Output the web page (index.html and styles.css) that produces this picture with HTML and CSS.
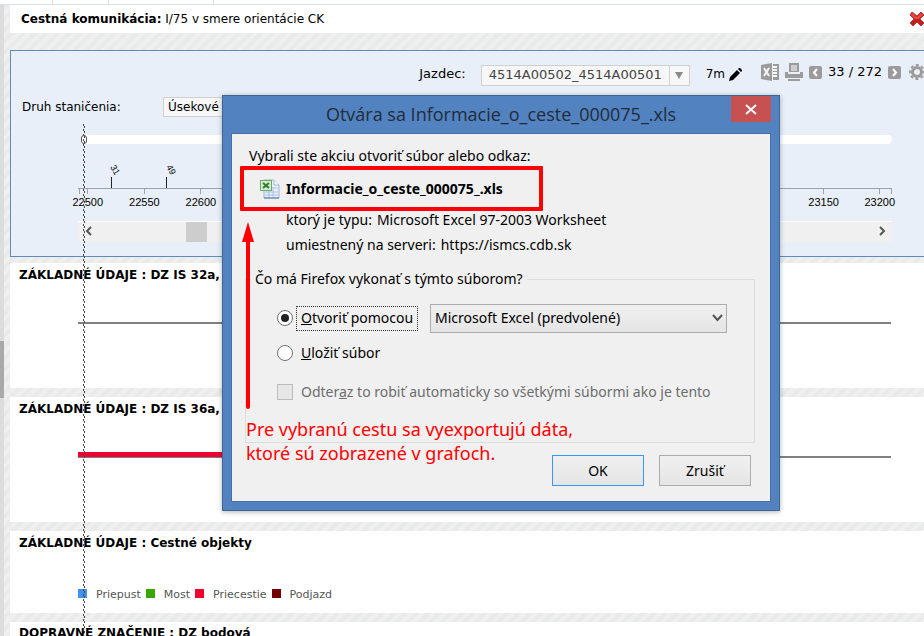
FILE: index.html
```html
<!DOCTYPE html>
<html lang="sk">

<head>
  <meta charset="utf-8" />
  <title>Cestná komunikácia I/75</title>
  <meta name="viewport" content="width=device-width, initial-scale=1" />
  <link rel="stylesheet" href="styles.css">
</head>

<body>
  <div class="tabs">
    <span class="tab tab-first"></span>
    <span class="tab tab-second"></span>
    <span class="tab tab-third"></span>
  </div>

  <div class="layout">
    <div class="splitter"><div class="splitter-handle"></div></div>

    <main class="content">
      <header class="road">
        <h1 class="road-name"><b>Cestná komunikácia:</b> I/75 v smere orientácie CK</h1>
        <button class="icon-button" aria-label="Zavrieť">
          <svg width="16" height="16" viewBox="0 0 16 16">
            <path d="M3 1 L8 5 L12 1 L15 4 L11 8 L15 12 L12 15 L8 11 L4 15 L1 12 L5 8 L1 4 Z" fill="#c51d1d" stroke="#b43c3c" />
            <path d="M3 2 L8 6 L12 2 L14 4 L10 8 H6 L2 4 Z" fill="#e04a45" />
          </svg>
        </button>
      </header>

      <section class="toolbox">
        <div class="toolbar">
          <label class="rider-label" for="rider">Jazdec:</label>
          <div class="combo">
            <select id="rider" class="combo-select">
              <option>4514A00502_4514A00501</option>
            </select>
            <span class="combo-arrow"><svg width="8" height="7"><path d="M0 0 H8 L4 7 Z" fill="#8a8a8a" /></svg></span>
          </div>
          <span class="offset">7m</span>
          <button class="icon-button" aria-label="Upraviť">
            <svg width="13" height="13" viewBox="0 0 13 13"><path d="M0 13 L1 9 L8 2 L11 5 L4 12 Z M9 1 L10 0 H11 L13 2 V3 L12 4 Z" fill="#000" /></svg>
          </button>
          <div class="tools">
            <button class="icon-button" aria-label="Export do Excelu">
              <svg width="18" height="18" viewBox="0 0 18 18">
                <path d="M0 2 L11 0 V18 L0 16 Z M12 1 H18 V17 H12 Z" fill="#9b9b9b" />
                <path d="M3 5 L8 13 M8 5 L3 13" stroke="#f4f6f8" stroke-width="2" />
                <path d="M12 4 H16 M12 7 H16 M12 10 H16 M12 13 H16" stroke="#f4f6f8" stroke-width="2" stroke-dasharray="4 1" />
              </svg>
            </button>
            <button class="icon-button" aria-label="Tlačiť">
              <svg width="18" height="18" viewBox="0 0 18 18">
                <path d="M4 0 H14 V9 H4 Z M0 9 H3 V11 H15 V9 H18 V15 H0 Z M3 16 H15 V18 H3 Z" fill="#9b9b9b" />
                <path d="M6 3 H12 M6 5 H12 M6 7 H12" stroke="#fff" />
              </svg>
            </button>
            <button class="icon-button" aria-label="Predchádzajúci">
              <svg width="13" height="13" viewBox="0 0 13 13"><rect width="13" height="13" rx="2" fill="#9b9b9b" /><path d="M8 3 L5 6.500 L8 10" fill="none" stroke="#fff" stroke-width="2" /></svg>
            </button>
            <span class="pager">33 / 272</span>
            <button class="icon-button" aria-label="Nasledujúci">
              <svg width="13" height="13" viewBox="0 0 13 13"><rect width="13" height="13" rx="2" fill="#9b9b9b" /><path d="M5 3 L8 6.500 L5 10" fill="none" stroke="#fff" stroke-width="2" /></svg>
            </button>
            <button class="icon-button gear" aria-label="Nastavenia">
              <svg width="16" height="16" viewBox="0 0 16 16">
                <circle cx="8" cy="8" r="4.500" fill="none" stroke="#9b9b9b" stroke-width="3" />
                <circle cx="8" cy="8" r="7" fill="none" stroke="#9b9b9b" stroke-width="2" stroke-dasharray="3 2.500" stroke-dashoffset="1.500" />
              </svg>
            </button>
          </div>
        </div>

        <div class="chainage">
          <label class="chainage-label" for="chainage">Druh staničenia:</label>
          <select id="chainage" class="chainage-select">
            <option>Úsekové</option>
          </select>
        </div>

        <div class="plot">
          <input class="slider" type="range" min="0" max="100" value="0" aria-label="Poloha jazdca">
          <svg class="axis" width="100%" height="48">
            <g stroke="#a0a0a8" shape-rendering="crispEdges">
              <line x1="0" y1="26" x2="100%" y2="26" />
              <line x1="1" y1="26" x2="1" y2="32" />
              <line x1="99.900%" y1="26" x2="99.900%" y2="32" />
              <line x1="1.200%" y1="26" x2="1.200%" y2="32" />
              <line x1="8.150%" y1="26" x2="8.150%" y2="32" />
              <line x1="15.100%" y1="26" x2="15.100%" y2="32" />
              <line x1="91.600%" y1="26" x2="91.600%" y2="32" />
              <line x1="98.500%" y1="26" x2="98.500%" y2="32" />
            </g>
            <g stroke="#222" shape-rendering="crispEdges">
              <line x1="4.100%" y1="15" x2="4.100%" y2="26" />
              <line x1="10.900%" y1="15" x2="10.900%" y2="26" />
            </g>
            <g class="axis-text">
              <text x="1.200%" y="44">22500</text>
              <text x="8.150%" y="44">22550</text>
              <text x="15.100%" y="44">22600</text>
              <text x="91.600%" y="44">23150</text>
              <text x="98.500%" y="44">23200</text>
            </g>
            <g class="marker-text">
              <text transform="translate(32 5) rotate(60)">31</text>
              <text transform="translate(88 5) rotate(60)">49</text>
            </g>
          </svg>
          <div class="scroller">
            <button class="scroller-button" aria-label="Doľava"><svg width="7" height="10"><path d="M6 1 L2 5 L6 9" fill="none" stroke="#555" stroke-width="2" /></svg></button>
            <div class="scroller-track"><div class="scroller-thumb"></div></div>
            <button class="scroller-button" aria-label="Doprava"><svg width="7" height="10"><path d="M1 1 L5 5 L1 9" fill="none" stroke="#555" stroke-width="2" /></svg></button>
          </div>
        </div>
      </section>

      <section class="chart">
        <h2 class="chart-title">ZÁKLADNÉ ÚDAJE : DZ IS 32a,</h2>
        <div class="baseline"></div>
      </section>

      <section class="chart">
        <h2 class="chart-title">ZÁKLADNÉ ÚDAJE : DZ IS 36a,</h2>
        <div class="baseline baseline-band"><div class="band"></div></div>
      </section>

      <section class="chart chart-objects">
        <h2 class="chart-title">ZÁKLADNÉ ÚDAJE : Cestné objekty</h2>
        <ul class="legend">
          <li class="legend-item culvert">Priepust</li>
          <li class="legend-item bridge">Most</li>
          <li class="legend-item crossing">Priecestie</li>
          <li class="legend-item underpass">Podjazd</li>
        </ul>
      </section>

      <section class="chart chart-signs">
        <h2 class="chart-title">DOPRAVNÉ ZNAČENIE : DZ bodová</h2>
      </section>
    </main>
  </div>

  <svg class="cursor-line" width="2" shape-rendering="crispEdges">
    <line x1="0.500" y1="0" x2="0.500" y2="100%" stroke="#444" stroke-dasharray="2 3" />
    <line x1="1.500" y1="2" x2="1.500" y2="100%" stroke="#444" stroke-dasharray="2 3" />
  </svg>

  <div class="dialog" role="dialog" aria-labelledby="dialog-title">
    <div class="dialog-bar">
      <h2 id="dialog-title" class="dialog-title">Otvára sa Informacie_o_ceste_000075_.xls</h2>
      <button class="dialog-close" aria-label="Zavrieť"><svg width="12" height="11"><path d="M1 1 L11 10 M11 1 L1 10" stroke="#fff" stroke-width="2" /></svg></button>
    </div>
    <form class="dialog-body">
      <p class="intro">Vybrali ste akciu otvoriť súbor alebo odkaz:</p>
      <div class="file">
        <svg width="20" height="20" viewBox="0 0 20 20">
          <path d="M7 1 H14 L19 6 V19 H4 V1 Z" fill="#e9f0f9" stroke="#9db4d3" />
          <path d="M14 1 V6 H19" fill="#fff" stroke="#9db4d3" />
          <path d="M5 13 H18 M5 16 H18 M9 12 V18 M13 8 V18 M13 9 H18" stroke="#a9c0df" />
          <path d="M4 19 H19" stroke="#4f79b5" />
          <rect x="0" y="1" width="12" height="11" fill="#6fa86c" />
          <rect x="1" y="2" width="10" height="9" fill="#d6ebd0" />
          <path d="M3 4 L9 9 M9 4 L3 9" stroke="#2f7d32" stroke-width="2" />
        </svg>
        <strong>Informacie_o_ceste_000075_.xls</strong>
      </div>
      <dl class="details">
        <dt>ktorý je typu:</dt>
        <dd>Microsoft Excel 97-2003 Worksheet</dd>
      </dl>
      <dl class="details">
        <dt>umiestnený na serveri:</dt>
        <dd>https://ismcs.cdb.sk</dd>
      </dl>

      <fieldset class="choice">
        <legend class="choice-title">Čo má Firefox vykonať s týmto súborom?</legend>
        <div class="option option-open">
          <input class="radio" type="radio" name="action" id="open" checked>
          <label class="focused" for="open"><u>O</u>tvoriť pomocou</label>
          <div class="app">
            <select class="app-select" aria-label="Aplikácia">
              <option>Microsoft Excel (predvolené)</option>
            </select>
            <svg class="app-arrow" width="11" height="8"><path d="M1 1 L5.500 6 L10 1" fill="none" stroke="#555" stroke-width="2" /></svg>
          </div>
        </div>
        <div class="option">
          <input class="radio" type="radio" name="action" id="save">
          <label for="save"><u>U</u>ložiť súbor</label>
        </div>
        <div class="option option-auto">
          <input class="check" type="checkbox" id="auto" disabled>
          <label for="auto">Odter<u>a</u>z to robiť automaticky so všetkými súbormi ako je tento</label>
        </div>
      </fieldset>

      <div class="actions">
        <button type="button" class="action action-default">OK</button>
        <button type="button" class="action">Zrušiť</button>
      </div>
    </form>

    <div class="mark-box"></div>
    <svg class="mark-arrow" width="12" height="187" viewBox="0 0 12 187">
      <path d="M6 0 L12 20 H0 Z" fill="#f00" />
      <path d="M6 18 V185" stroke="#f00" stroke-width="4" stroke-linecap="round" />
    </svg>
    <p class="mark-note">Pre vybranú cestu sa vyexportujú dáta,<br>ktoré sú zobrazené v grafoch.</p>
  </div>
</body>

</html>
```
FILE: styles.css
```css
* {
  box-sizing: border-box;
}

body {
  display: flex;
  flex-direction: column;
  height: 100vh;
  margin: 0;
  overflow: hidden;
  position: relative;
  font-family: Verdana, 'DejaVu Sans', sans-serif;
  font-size: 12px;
  line-height: 16px;
  color: #000;
}

h1,
h2,
p,
dl,
dd,
ul {
  margin: 0;
  padding: 0;
}

button,
select,
input {
  font: inherit;
  color: inherit;
  margin: 0;
}

.tabs {
  display: flex;
  flex: none;
  height: 5px;
  background: #fff;
  border-bottom: 1px solid #dbe1e5;
}

.tab {
  border-right: 1px solid #dbe1e5;
}

.tab-first {
  width: 53px;
}

.tab-second {
  width: 56px;
}

.tab-third {
  width: 105px;
}

.layout {
  display: flex;
  flex: 1;
  min-height: 0;
}

.splitter {
  display: flex;
  align-items: center;
  flex: none;
  width: 4px;
  padding-top: 97px;
  background: #dcdcdc;
}

.splitter-handle {
  width: 4px;
  height: 57px;
  background: #a9a9a9;
}

.content {
  flex: 1;
  min-width: 0;
  padding-left: 6px;
  overflow: hidden;
  background: repeating-linear-gradient(135deg, #e9ebea 0, #e9ebea 4px, #eeefee 4px, #eeefee 8px);
}

/* road header */

.road {
  display: flex;
  align-items: center;
  justify-content: space-between;
  height: 28px;
  padding-left: 11px;
  margin-bottom: 17px;
  background: #fff;
}

.road-name {
  font-size: 12px;
  font-weight: normal;
}

.icon-button {
  display: flex;
  flex: none;
  padding: 0;
  border: 0;
  background: none;
}

.road .icon-button {
  margin-right: -1px;
}

/* toolbox */

.toolbox {
  border: 1px solid #5b8db8;
  border-right: 0;
  background: #e8eff8;
  padding-bottom: 14px;
  margin-bottom: 6px;
}

.toolbar {
  display: flex;
  align-items: center;
  justify-content: flex-end;
  height: 46px;
}

.rider-label {
  margin-right: 15px;
  font-size: 13px;
}

.combo {
  display: flex;
  height: 21px;
  margin-top: 2px;
  margin-right: 16px;
  border: 1px solid #cfcfcf;
  background: #f7f7f7;
}

.combo-select {
  width: 188px;
  padding: 0 7px;
  border: 0;
  border-right: 1px solid #cfcfcf;
  background: none;
  font-size: 13px;
  color: #444;
  appearance: none;
}

.combo-arrow {
  display: flex;
  align-items: center;
  justify-content: center;
  width: 19px;
}

.offset {
  margin-right: 4px;
}

.tools {
  display: flex;
  align-items: center;
  gap: 6px;
  margin: 0 -1px 4px 19px;
}

.pager {
  font-size: 13px;
}

.gear {
  margin-left: 2px;
}

.chainage {
  display: flex;
  align-items: center;
  padding-left: 11px;
  height: 20px;
}

.chainage-label {
  width: 141px;
}

.chainage-select {
  width: 160px;
  height: 20px;
  padding: 0 4px;
  border: 1px solid #cfcfcf;
  background: #f7f7f7;
  appearance: none;
}

.plot {
  margin: 18px 32px 0 67px;
}

.slider {
  display: block;
  width: calc(100% - 3px);
  height: 9px;
  margin-left: 3px;
  border-radius: 5px;
  background: #fff;
  appearance: none;
}

.slider::-webkit-slider-thumb {
  width: 6px;
  height: 9px;
  border: 1px solid #555;
  border-radius: 3px;
  appearance: none;
}

.axis {
  display: block;
  margin-top: 18px;
  overflow: visible;
}

.axis-text {
  font-family: Arial, 'Liberation Sans', sans-serif;
  font-size: 11px;
  text-anchor: middle;
}

.marker-text {
  font-family: Arial, 'Liberation Sans', sans-serif;
  font-size: 9px;
}

.scroller {
  display: flex;
  height: 21px;
  margin-top: 11px;
  border-top: 1px solid #fff;
  background: #f0f0f0;
}

.scroller-button {
  width: 20px;
  padding: 0 6px;
  border: 0;
  background: none;
  line-height: 1;
}

.scroller-track {
  flex: 1;
}

.scroller-thumb {
  width: 21px;
  height: 20px;
  margin-left: 88px;
  background: #cdcdcd;
}

/* charts */

.chart {
  min-height: 125px;
  padding: 4px 0 0 9px;
  margin-bottom: 9px;
  background: #fff;
}

.chart-objects {
  min-height: 82px;
}

.chart-signs {
  min-height: 0;
  padding-top: 3px;
  margin-bottom: 0;
}

.chart-title {
  font-size: 12px;
  line-height: 16px;
}

.baseline {
  height: 2px;
  margin: 39px 33px 0 59px;
  background: #808080;
}

.baseline-band {
  height: 6px;
  margin-top: 35px;
  background: linear-gradient(transparent 66%, #808080 66%);
}

.band {
  width: 50%;
  height: 5px;
  background: #f0002f;
}

.legend {
  display: flex;
  gap: 5px;
  margin: 37px 0 0 59px;
  font-size: 11px;
  line-height: 14px;
  color: #555;
  list-style: none;
}

.legend-item::before {
  content: '';
  display: inline-block;
  width: 9px;
  height: 9px;
  margin-right: 9px;
}

.culvert::before {
  background: #4390f0;
}

.bridge::before {
  background: #38a800;
}

.crossing::before {
  background: #f0002f;
}

.underpass::before {
  background: #730000;
}

.cursor-line {
  position: absolute;
  top: 124px;
  left: 83px;
  height: calc(100% - 124px);
}

/* download dialog */

.dialog {
  position: absolute;
  top: 95px;
  left: 222px;
  width: 558px;
  padding: 0 8px 8px;
  border: 1px solid #3d6596;
  background: #5282c0;
  box-shadow: 0 1px 5px rgba(0, 0, 0, 0.3);
  font-family: 'Segoe UI', 'Noto Sans', sans-serif;
  font-size: 14px;
  line-height: 20px;
}

.dialog-bar {
  display: flex;
  align-items: flex-start;
  height: 37px;
}

.dialog-title {
  flex: 1;
  padding-left: 40px;
  font-family: 'Segoe UI', 'Open Sans', sans-serif;
  font-size: 18px;
  font-weight: normal;
  line-height: 37px;
  text-align: center;
  color: #222c3a;
}

.dialog-close {
  display: flex;
  align-items: center;
  justify-content: center;
  width: 40px;
  height: 26px;
  border: 0;
  background: #c75050;
}

.dialog-body {
  padding: 12px 15px 15px 13px;
  border: 1px solid #4670a6;
  background: #f0f0f0;
}

.intro {
  padding-left: 4px;
}

.file {
  display: flex;
  align-items: center;
  gap: 6px;
  padding-left: 15px;
  margin: 13px 0 11px;
}

.details {
  display: flex;
  gap: 5px;
  padding-left: 41px;
  margin-bottom: 5px;
}

.choice {
  height: 174px;
  padding: 0 0 0 31px;
  margin: 14px 0 12px;
  border: 1px solid #dcdcdc;
}

.choice-title {
  padding: 0 4px;
  margin-left: -26px;
}

.option {
  display: flex;
  align-items: center;
  gap: 8px;
  height: 20px;
}

.option-open {
  gap: 3px;
  height: 28px;
  margin: 15px 0 11px;
}

.option-auto {
  margin-top: 19px;
  color: #6d6d6d;
}

.radio {
  display: flex;
  align-items: center;
  justify-content: center;
  width: 16px;
  height: 16px;
  border: 1px solid #707070;
  border-radius: 50%;
  background: #fff;
  appearance: none;
}

.radio:checked::before {
  content: '';
  width: 8px;
  height: 8px;
  border-radius: 50%;
  background: #222;
}

.check {
  width: 16px;
  height: 16px;
  border: 1px solid #bcbcbc;
  background: #e6e6e6;
  appearance: none;
}

.focused {
  width: 122px;
  padding: 1px 0 2px 4px;
  border: 1px dotted #333;
  white-space: nowrap;
}

.app {
  display: flex;
  align-items: center;
  position: relative;
  width: 297px;
  margin-left: 9px;
}

.app-select {
  width: 100%;
  height: 29px;
  padding: 0 4px;
  border: 1px solid #acacac;
  border-radius: 0;
  background: linear-gradient(#f0f0f0, #e5e5e5);
  appearance: none;
}

.app-arrow {
  position: absolute;
  right: 4px;
}

.actions {
  display: flex;
  justify-content: flex-end;
  gap: 15px;
  padding-right: 4px;
}

.action {
  width: 92px;
  height: 31px;
  border: 1px solid #acacac;
  background: linear-gradient(#f0f0f0, #e5e5e5);
}

.action-default {
  border-color: #3399ff;
}

/* red notes over the dialog */

.mark-box {
  position: absolute;
  top: 70px;
  left: 17px;
  width: 303px;
  height: 45px;
  border: 4px solid #f00;
  border-radius: 1px;
}

.mark-arrow {
  position: absolute;
  top: 126px;
  left: 19px;
}

.mark-note {
  position: absolute;
  top: 321px;
  left: 23px;
  font-size: 18px;
  line-height: 24px;
  color: #f00;
}
```
